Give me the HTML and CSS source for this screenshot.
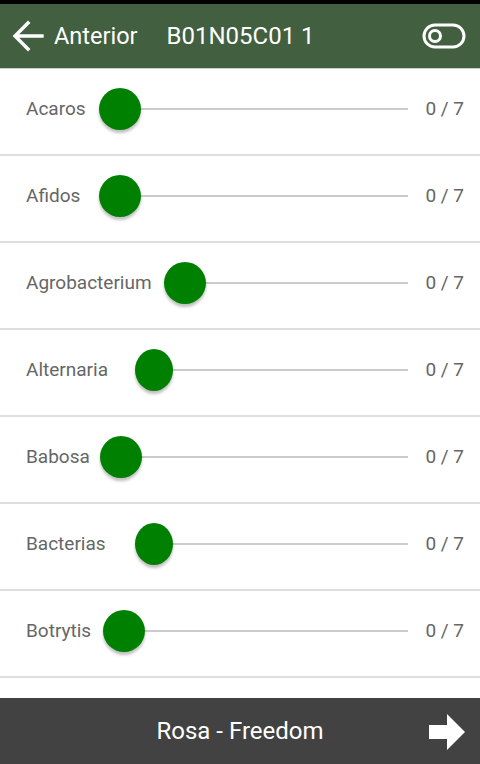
FILE: index.html
```html
<!DOCTYPE html>
<html lang="es">
<head>
<meta charset="utf-8">
<title>B01N05C01 1</title>
<link rel="stylesheet" href="styles.css">
</head>
<body>
<div class="screen">
  <div class="statusbar"></div>
  <header class="appbar">
    <button class="back">
      <svg width="34" height="34" viewBox="0 0 34 34"><path d="M31 17H5M17 4L4 17l13 13" fill="none" stroke="#fff" stroke-width="3.4" stroke-linecap="square"/></svg>
      <span>Anterior</span>
    </button>
    <h1 class="title">B01N05C01 1</h1>
    <span class="toggle">
      <svg width="44" height="26" viewBox="0 0 44 26"><rect x="2" y="2" width="40" height="22" rx="11" fill="none" stroke="#fff" stroke-width="3"/><circle cx="13" cy="13" r="5.5" fill="none" stroke="#fff" stroke-width="3"/></svg>
    </span>
  </header>
  <main class="list">
    <div class="row" style="--lw:73px"><span class="label">Acaros</span><div class="slider"><span class="thumb"></span><span class="track"></span></div><span class="value">0 / 7</span></div>
    <div class="row" style="--lw:73px"><span class="label">Afidos</span><div class="slider"><span class="thumb"></span><span class="track"></span></div><span class="value">0 / 7</span></div>
    <div class="row" style="--lw:138px"><span class="label">Agrobacterium</span><div class="slider"><span class="thumb"></span><span class="track"></span></div><span class="value">0 / 7</span></div>
    <div class="row" style="--lw:109px"><span class="label">Alternaria</span><div class="slider"><span class="thumb narrow"></span><span class="track"></span></div><span class="value">0 / 7</span></div>
    <div class="row" style="--lw:74px"><span class="label">Babosa</span><div class="slider"><span class="thumb"></span><span class="track"></span></div><span class="value">0 / 7</span></div>
    <div class="row" style="--lw:109px"><span class="label">Bacterias</span><div class="slider"><span class="thumb narrow"></span><span class="track"></span></div><span class="value">0 / 7</span></div>
    <div class="row" style="--lw:77px"><span class="label">Botrytis</span><div class="slider"><span class="thumb"></span><span class="track"></span></div><span class="value">0 / 7</span></div>
  </main>
  <footer class="bottombar">
    <span class="variety">Rosa - Freedom</span>
    <svg class="next" width="38" height="38" viewBox="0 0 38 38"><path d="M1 12H19V1L37 19 19 37V26H1Z" fill="#fff"/></svg>
  </footer>
</div>
</body>
</html>
```

FILE: styles.css
```css
* { box-sizing: border-box; }
html, body { margin: 0; padding: 0; }
body {
  width: 480px;
  height: 764px;
  overflow: hidden;
  background: #fff;
  font-family: Roboto, "Liberation Sans", sans-serif;
}
.screen {
  display: flex;
  flex-direction: column;
  height: 764px;
}
.statusbar {
  height: 4px;
  background: #000;
  flex: none;
}
.appbar {
  flex: none;
  height: 65px;
  background: #425f40;
  border-bottom: 1px solid #c9cfc8;
  display: flex;
  align-items: center;
  padding: 0 14px 0 11px;
  color: #fff;
}
.back {
  display: flex;
  align-items: center;
  gap: 9px;
  background: none;
  border: 0;
  padding: 0;
  color: #fff;
  font: 23.5px Roboto, "Liberation Sans", sans-serif;
}
.title {
  margin: 0 0 0 29px;
  font-weight: 400;
  font-size: 24px;
  flex: 1;
}
.toggle { display: flex; }
.list {
  flex: 1;
  overflow: hidden;
}
.row {
  height: 87px;
  border-bottom: 2px solid #dedede;
  display: flex;
  align-items: center;
  padding: 0 16px 6px 26px;
}
.label {
  width: var(--lw);
  flex: none;
  font-size: 19px;
  color: #666;
}
.slider {
  flex: 1;
  display: flex;
  align-items: center;
  margin-right: 17px;
}
.thumb {
  position: relative;
  z-index: 1;
  width: 42px;
  height: 42px;
  border-radius: 50%;
  background: #008000;
  box-shadow: 0 3px 3px rgba(0, 0, 0, 0.25);
  flex: none;
}
.thumb.narrow { width: 38px; }
.track {
  flex: 1;
  height: 2px;
  background: #cbcbcb;
  margin-left: -21px;
}
.value {
  font-size: 19px;
  color: #666;
  white-space: nowrap;
}
.bottombar {
  flex: none;
  height: 66px;
  background: #424242;
  display: flex;
  align-items: center;
  justify-content: center;
  position: relative;
}
.variety {
  color: #fff;
  font-size: 24px;
}
.next {
  position: absolute;
  right: 14px;
  top: 15px;
}
```
